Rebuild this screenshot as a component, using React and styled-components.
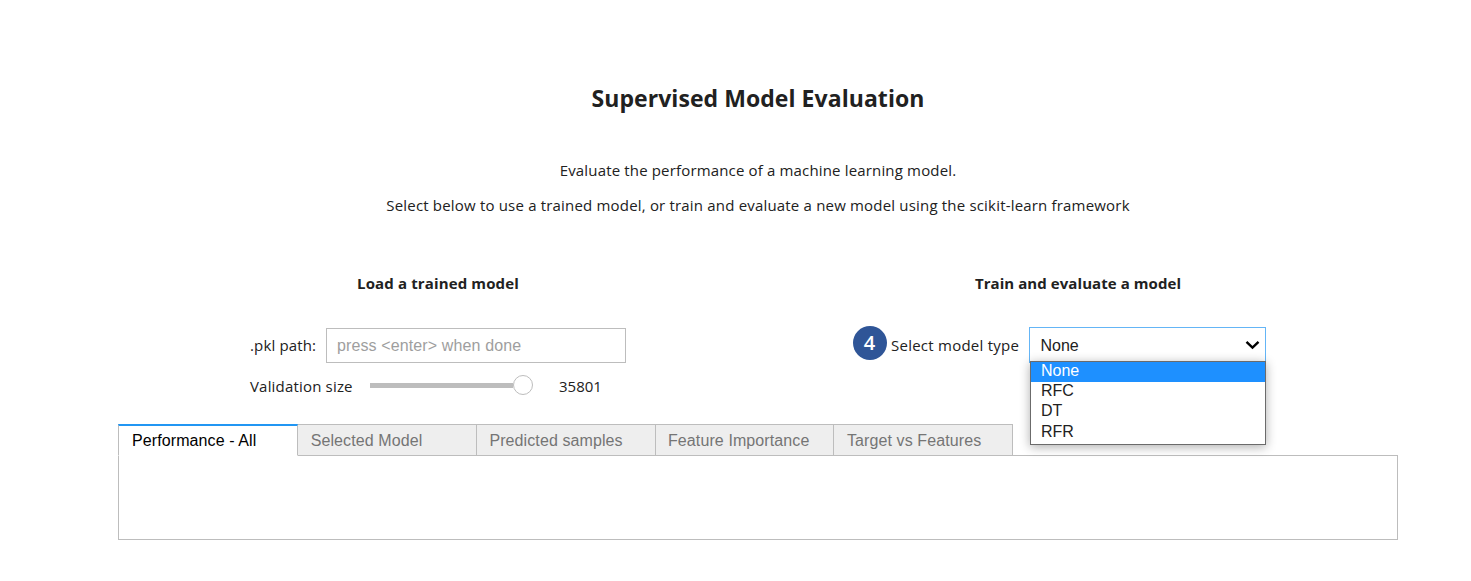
import React from 'react';
import styled, { createGlobalStyle } from 'styled-components';

const GlobalStyle = createGlobalStyle`
  * { box-sizing: border-box; }
  body { margin: 0; background: #fff; }
`;

const sans = '"Open Sans", "Noto Sans", sans-serif';
const arial = '"Liberation Sans", Arial, sans-serif';

const Page = styled.main`
  width: 1471px;
  height: 581px;
  padding: 83px 73px 0 118px;
  overflow: hidden;
  font: 15px/20px ${sans};
  color: #212121;
  white-space: nowrap;
`;

const Title = styled.h1`
  margin: 0;
  font-size: 23px;
  line-height: 30px;
  font-weight: 700;
  text-align: center;
  letter-spacing: 0.06px;
`;

const Intro = styled.div`
  display: flex;
  flex-direction: column;
  align-items: center;
  gap: 15px;
  margin-top: 47px;
`;

const Line = styled.p`
  margin: 0;
  letter-spacing: ${(p) => p.$tracking || 0}px;
`;

const Columns = styled.div`
  display: grid;
  grid-template-columns: 640px 640px;
  margin-top: 58px;
  height: 151px;
`;

const Heading = styled.h2`
  margin: 0;
  font-size: 15px;
  line-height: 20px;
  font-weight: 700;
  text-align: center;
  letter-spacing: ${(p) => p.$tracking || 0}px;
`;

const Row = styled.div`
  display: flex;
  align-items: center;
  height: 35px;
  margin-top: ${(p) => p.$top}px;
  padding-left: ${(p) => p.$left}px;
`;

const Label = styled.label`
  width: ${(p) => p.$width}px;
  margin-top: ${(p) => p.$shift || 0}px;
  letter-spacing: ${(p) => p.$tracking || 0}px;
`;

const PathInput = styled.input`
  width: 300px;
  height: 35px;
  padding: 0 10px;
  border: 1px solid #bdbdbd;
  border-radius: 0;
  outline: 0;
  font: 16px ${arial};
  letter-spacing: 0.12px;
  &::placeholder { color: #9e9e9e; opacity: 1; }
`;

const Slider = styled.div`
  display: flex;
  align-items: center;
  width: 163px;
  height: 20px;
  margin-right: 26px;
  &::before {
    content: '';
    width: 143px;
    height: 5px;
    background: #bdbdbd;
  }
`;

const Handle = styled.span`
  width: 20px;
  height: 20px;
  margin-bottom: 1px;
  border: 1px solid #bdbdbd;
  border-radius: 50%;
  background: #fff;
`;

const Value = styled.span`
  padding-top: 1px;
`;

const Step = styled.span`
  width: 34px;
  height: 34px;
  margin: -3px 4.5px 0 -0.5px;
  border-radius: 50%;
  background: #2f5597;
  color: #fff;
  font: 600 20px/33px ${sans};
  text-align: center;
`;

const Select = styled.div`
  position: relative;
  display: flex;
  align-items: center;
  justify-content: space-between;
  width: 237px;
  height: 36px;
  padding: 0 5px 0 10.5px;
  border: 1px solid #64b5f6;
  font: 16px ${arial};
`;

const Current = styled.span`
  padding-top: 2px;
`;

const Menu = styled.ul`
  position: absolute;
  z-index: 2;
  top: 33px;
  left: 0;
  width: 236px;
  height: 84px;
  margin: 0;
  padding: 0;
  list-style: none;
  border: 1px solid #6b6b6b;
  background: #fff;
  box-shadow: 0 2px 10px rgba(0, 0, 0, 0.32);
`;

const Option = styled.li`
  height: 20px;
  padding-left: 10px;
  line-height: 18px;
  background: ${(p) => (p.$active ? '#1e90ff' : 'transparent')};
  color: ${(p) => (p.$active ? '#fff' : '#212121')};
  &:last-child { padding-top: 1px; }
`;

const Tabs = styled.nav`
  position: relative;
  z-index: 1;
  display: flex;
  height: 32px;
`;

const Tab = styled.button`
  width: ${(p) => p.$width}px;
  height: 32px;
  padding: 0 0 0 ${(p) => p.$inset}px;
  border: 1px solid #bdbdbd;
  border-left-width: ${(p) => (p.$active ? 1 : 0)}px;
  border-radius: 0;
  background: #eee;
  color: #757575;
  font: 16px/31px ${arial};
  letter-spacing: 0.1px;
  text-align: left;
  ${(p) => p.$active && `
    border-top: 2px solid #2196f3;
    border-bottom-color: #fff;
    background: #fff;
    color: #000;
    line-height: 29px;
  `}
`;

const Panel = styled.div`
  height: 85px;
  margin-top: -1px;
  border: 1px solid #bdbdbd;
`;

const options = ['None', 'RFC', 'DT', 'RFR'];
const tabs = [
  ['Performance - All', 180, 13],
  ['Selected Model', 179, 12.7],
  ['Predicted samples', 179, 12.4],
  ['Feature Importance', 178, 12],
  ['Target vs Features', 179, 13],
];

export default function App() {
  return (
    <Page>
      <GlobalStyle />
      <Title>Supervised Model Evaluation</Title>
      <Intro>
        <Line $tracking={0.16}>Evaluate the performance of a machine learning model.</Line>
        <Line $tracking={0.185}>Select below to use a trained model, or train and evaluate a new model using the scikit-learn framework</Line>
      </Intro>
      <Columns>
        <section>
          <Heading $tracking={0.13}>Load a trained model</Heading>
          <Row $top={35} $left={132}>
            <Label $width={76} $tracking={0.14} $shift={-2}>.pkl path:</Label>
            <PathInput placeholder="press <enter> when done" />
          </Row>
          <Row $top={5} $left={132}>
            <Label $width={120} $tracking={0.18} $shift={1}>Validation size</Label>
            <Slider><Handle /></Slider>
            <Value>35801</Value>
          </Row>
        </section>
        <section>
          <Heading $tracking={0.07}>Train and evaluate a model</Heading>
          <Row $top={34} $left={95}>
            <Step>4</Step>
            <Label $width={138} $tracking={0.25}>Select model type</Label>
            <Select>
              <Current>None</Current>
              <svg width="15" height="10" viewBox="0 0 15 10" fill="none" stroke="#000" strokeWidth="2.4">
                <path d="M1.5 1.8 7.5 7.6 13.5 1.8" />
              </svg>
              <Menu>
                {options.map((o, i) => <Option key={o} $active={i === 0}>{o}</Option>)}
              </Menu>
            </Select>
          </Row>
        </section>
      </Columns>
      <Tabs>
        {tabs.map(([label, width, inset], i) => (
          <Tab key={label} $width={width} $inset={inset} $active={i === 0}>{label}</Tab>
        ))}
      </Tabs>
      <Panel />
    </Page>
  );
}
